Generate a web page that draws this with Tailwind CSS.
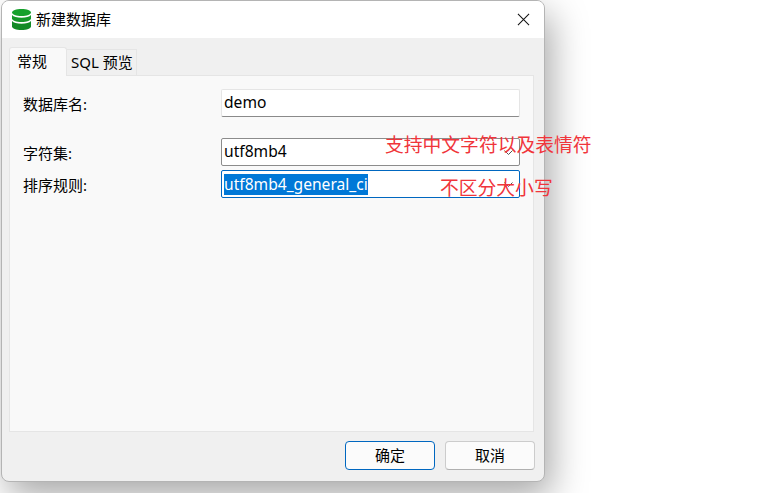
<!DOCTYPE html>
<html lang="zh-CN">
<head>
  <meta charset="UTF-8" />
  <title>新建数据库</title>
  <script src="https://cdn.jsdelivr.net/npm/@tailwindcss/browser@4"></script>
</head>
<body class="bg-white overflow-hidden font-['Noto_Sans','Noto_Sans_CJK_SC',sans-serif] text-black">
  <div class="relative w-[765px] h-[493px] overflow-hidden">
    <!-- dialog -->
    <div class="ml-px w-[544px] h-[482px] bg-[#f0f0f0] rounded-[8px] border border-[#b4b4b4] shadow-[6px_14px_36px_rgba(0,0,0,0.35)] overflow-hidden flex flex-col">
      <div class="h-[37px] bg-white flex items-center pl-[10px] pr-[14px] shrink-0">
        <svg class="w-[19px] h-[21px]" viewBox="0 0 19 21">
          <path fill="#16a02c" d="M0 3.5C0 1.6 4.2 0 9.5 0S19 1.6 19 3.5 14.800 7 9.500 7 0 5.400 0 3.500Z"/>
          <path fill="#16962a" d="M0 6c1.500 1.800 5 2.800 9.500 2.800S17.500 7.800 19 6v3.500c0 1.900-4.200 3.500-9.500 3.500S0 11.400 0 9.500Z"/>
          <path fill="#128a26" d="M0 12c1.500 1.800 5 2.800 9.500 2.800S17.500 13.800 19 12v5.500c0 1.900-4.200 3.500-9.500 3.500S0 19.400 0 17.500Z"/>
        </svg>
        <span class="ml-[5px] text-[15px] leading-none">新建数据库</span>
        <svg class="ml-auto w-[13px] h-[13px]" viewBox="0 0 14 14" fill="none" stroke="#111" stroke-width="1.1">
          <path d="M1 1l12 12M13 1L1 13"/>
        </svg>
      </div>

      <div class="flex items-end pl-[7px] h-[37px] shrink-0">
        <div class="relative z-10 w-[58px] h-[29px] -mb-px bg-[#f9f9f9] border border-b-0 border-[#e5e5e5] rounded-t-[3px] text-[15px] leading-[26px] pl-[7px]">常规</div>
        <div class="w-[70px] h-[26px] bg-[#f0f0f0] border border-l-0 border-b-0 border-[#e5e5e5] text-[15px] leading-[25px] pl-[4px] whitespace-nowrap">SQL 预览</div>
      </div>

      <div class="ml-[7px] w-[525px] h-[357px] bg-[#f9f9f9] border border-[#e5e5e5] pl-[13px] pr-[13px] pt-[13px] shrink-0">
        <div class="flex items-center h-[28px] text-[15px]">
          <span class="w-[198px] pt-[3px]">数据库名:</span>
          <div class="w-[299px] h-[28px] bg-white border border-[#e5e5e5] border-b-[#8a8a8a] rounded-[2px] pl-[2px] text-[15.6px] leading-[25px]">demo</div>
        </div>
        <div class="flex items-center h-[28px] mt-[21px] text-[15px]">
          <span class="w-[198px] pt-[2px]">字符集:</span>
          <div class="flex items-center w-[299px] h-[28px] bg-white border border-[#8c8c8c] rounded-[2px] pl-[2px] pr-[6px] text-[15.6px]">
            <span>utf8mb4</span>
            <svg class="ml-auto w-[9px] h-[5px]" viewBox="0 0 9 5" fill="none" stroke="#555"><path d="M.5.500l4 4 4-4"/></svg>
          </div>
        </div>
        <div class="flex items-center h-[28px] mt-[4px] text-[15px]">
          <span class="w-[198px] pt-[2px]">排序规则:</span>
          <div class="flex items-center w-[299px] h-[28px] bg-white border border-[#0067c0] rounded-[2px] pl-[2px] pr-[6px] text-[15.6px]">
            <span class="bg-[#0078d7] text-white h-[21px] leading-[21px]">utf8mb4_general_ci</span>
            <svg class="ml-auto w-[9px] h-[5px]" viewBox="0 0 9 5" fill="none" stroke="#555"><path d="M.5.500l4 4 4-4"/></svg>
          </div>
        </div>
      </div>

      <div class="flex justify-end gap-[10px] pr-[9px] pt-[9px]">
        <div class="w-[90px] h-[29px] bg-[#fbfbfb] border border-[#0067c0] rounded-[4px] text-center text-[15px] leading-[27px]">确定</div>
        <div class="w-[90px] h-[29px] bg-[#fbfbfb] border border-[#cccccc] border-b-[#b0b0b0] rounded-[4px] text-center text-[15px] leading-[27px]">取消</div>
      </div>
    </div>

    <!-- red notes drawn over the screenshot -->
    <span class="absolute left-[385px] top-[133px] text-[18.8px] leading-[24px] text-[#f0353b] whitespace-nowrap">支持中文字符以及表情符</span>
    <span class="absolute left-[440px] top-[176px] text-[18.8px] leading-[24px] text-[#f0353b] whitespace-nowrap">不区分大小写</span>
  </div>
</body>
</html>
